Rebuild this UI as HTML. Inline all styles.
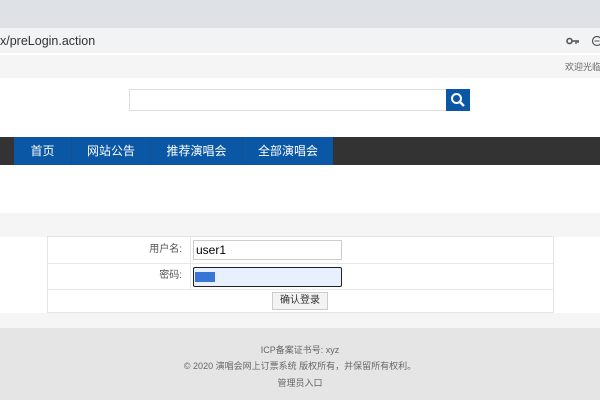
<!DOCTYPE html>
<html><head><meta charset="utf-8"><style>
*{margin:0;padding:0;box-sizing:border-box}
body{width:600px;height:400px;overflow:hidden;background:#fff;font-family:"Liberation Sans","Noto Sans CJK SC",sans-serif;position:relative}
.a{position:absolute}
</style></head><body>
<div class="a" style="left:0;top:0;width:600px;height:28px;background:#dee1e6"></div>
<div class="a" style="left:0;top:28px;width:600px;height:25px;background:#f1f3f4"></div>
<div class="a" style="left:0;top:32px;font-size:12.5px;color:#333;line-height:18px">x/preLogin.action</div>
<svg class="a" style="left:566px;top:37px" width="14" height="8"><circle cx="3.5" cy="4" r="2.5" fill="none" stroke="#555" stroke-width="1.6"/><path d="M6 4H13M10 4V7M12 4V6" stroke="#555" stroke-width="1.4" fill="none"/></svg>
<svg class="a" style="left:591px;top:35px" width="12" height="12"><circle cx="6" cy="6" r="4.5" fill="none" stroke="#555" stroke-width="1.2"/><path d="M3.5 6H8.5" stroke="#555"/></svg>
<div class="a" style="left:0;top:53px;width:600px;height:2px;background:#fff"></div>
<div class="a" style="left:0;top:55px;width:600px;height:23px;background:#f5f5f5"></div>
<div class="a" style="left:565px;top:61px;font-size:9px;color:#666;line-height:12px;white-space:nowrap">欢迎光临</div>
<div class="a" style="left:129px;top:89px;width:318px;height:22px;border:1px solid #ddd;background:#fff"></div>
<div class="a" style="left:446px;top:89px;width:24px;height:22px;background:#0a57a6"></div>
<svg class="a" style="left:450px;top:92px" width="16" height="16"><circle cx="6.5" cy="6.5" r="4.5" fill="none" stroke="#fff" stroke-width="2"/><path d="M10 10L14 14" stroke="#fff" stroke-width="2.4"/></svg>
<div class="a" style="left:0;top:137px;width:600px;height:28px;background:#333"></div>
<div class="a" style="left:14px;top:137px;width:319px;height:28px;background:#0a57a6;font-size:12px;color:#fff;line-height:28px;display:flex">
<div style="width:58px;text-align:center;border-right:1px solid #1a4f8a">首页</div>
<div style="width:79px;text-align:center;border-right:1px solid #1a4f8a">网站公告</div>
<div style="width:92px;text-align:center;border-right:1px solid #1a4f8a">推荐演唱会</div>
<div style="width:90px;text-align:center">全部演唱会</div>
</div>
<div class="a" style="left:0;top:213px;width:600px;height:24px;background:#f5f5f5"></div>
<div class="a" style="left:47px;top:236px;width:507px;height:77px;border:1px solid #e5e5e5;background:#fff"></div>
<div class="a" style="left:48px;top:263px;width:505px;height:1px;background:#e8e8e8"></div>
<div class="a" style="left:48px;top:289px;width:505px;height:1px;background:#e8e8e8"></div>
<div class="a" style="left:190px;top:237px;width:1px;height:52px;background:#e8e8e8"></div>
<div class="a" style="left:130px;top:244px;width:52px;text-align:right;font-size:10px;color:#555;line-height:12px">用户名:</div>
<div class="a" style="left:130px;top:270px;width:52px;text-align:right;font-size:10px;color:#555;line-height:12px">密码:</div>
<div class="a" style="left:193px;top:240px;width:149px;height:20px;border:1px solid #ccc;font-size:12px;line-height:18px;padding-left:2px;color:#000">user1</div>
<div class="a" style="left:193px;top:267px;width:149px;height:20px;border:1.5px solid #222;border-radius:2px;background:#e8f0fe"></div>
<div class="a" style="left:195px;top:272px;width:20px;height:10px;background:#3875d7"></div>
<div class="a" style="left:272px;top:292px;width:56px;height:18px;border:1px solid #ccc;background:#f3f3f3;font-size:10px;color:#333;text-align:center;line-height:16px">确认登录</div>
<div class="a" style="left:0;top:313px;width:600px;height:15px;background:#f5f5f5"></div>
<div class="a" style="left:0;top:328px;width:600px;height:72px;background:#e5e5e5;font-size:9px;color:#666;text-align:center;line-height:12px">
<div style="position:absolute;top:16px;width:600px">ICP备案证书号: xyz</div>
<div style="position:absolute;top:32px;width:600px">© 2020 演唱会网上订票系统 版权所有，并保留所有权利。</div>
<div style="position:absolute;top:49px;width:600px">管理员入口</div>
</div>
</body></html>
